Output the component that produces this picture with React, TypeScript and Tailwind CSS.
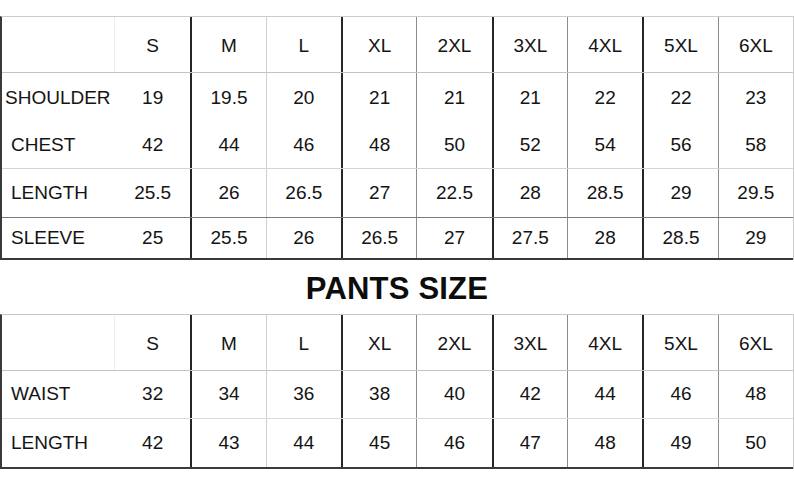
const sizes = ['S', 'M', 'L', 'XL', '2XL', '3XL', '4XL', '5XL', '6XL'];

// left divider of each size column (S has none)
const colLine = [
  '',
  'border-l-2 border-l-[#262626]',
  'border-l border-l-[#cfcfcf]',
  'border-l-2 border-l-[#262626]',
  'border-l border-l-[#8c8c8c]',
  'border-l-2 border-l-[#262626]',
  'border-l border-l-[#8c8c8c]',
  'border-l-2 border-l-[#262626]',
  'border-l border-l-[#8c8c8c]',
];

type Row = { label: string; values: string[]; h: string; line: string; pad?: string };

const shirt: Row[] = [
  { label: 'SHOULDER', values: ['19', '19.5', '20', '21', '21', '21', '22', '22', '23'], h: 'h-[50px]', line: '', pad: 'pl-[3px]' },
  { label: 'CHEST', values: ['42', '44', '46', '48', '50', '52', '54', '56', '58'], h: 'h-[46px]', line: 'border-b border-b-[#d4d4d4]' },
  { label: 'LENGTH', values: ['25.5', '26', '26.5', '27', '22.5', '28', '28.5', '29', '29.5'], h: 'h-[49px]', line: 'border-b border-b-[#7a7a7a]' },
  { label: 'SLEEVE', values: ['25', '25.5', '26', '26.5', '27', '27.5', '28', '28.5', '29'], h: 'h-[42px]', line: 'border-b-2 border-b-[#3a3a3a]' },
];

const pants: Row[] = [
  { label: 'WAIST', values: ['32', '34', '36', '38', '40', '42', '44', '46', '48'], h: 'h-[48px]', line: 'border-b border-b-[#dadada]' },
  { label: 'LENGTH', values: ['42', '43', '44', '45', '46', '47', '48', '49', '50'], h: 'h-[50px]', line: 'border-b-2 border-b-[#3a3a3a]' },
];

function SizeRow({ row }: { row: Row }) {
  return (
    <div className={`grid grid-cols-[113px_repeat(9,minmax(0,1fr))] ${row.h} ${row.line}`}>
      <div className={`flex items-center ${row.pad ?? 'pl-[9px]'}`}>{row.label}</div>
      {row.values.map((v, i) => (
        <div key={i} className={`flex items-center justify-center ${colLine[i]}`}>
          {v}
        </div>
      ))}
    </div>
  );
}

function Header() {
  return (
    <div className="grid grid-cols-[113px_repeat(9,minmax(0,1fr))] h-[56px] border-b border-b-[#c4c4c4]">
      <div className="border-r border-r-[#eeeeee]" />
      {sizes.map((s, i) => (
        <div key={s} className={`flex items-center justify-center pt-[4px] ${colLine[i]}`}>
          {s}
        </div>
      ))}
    </div>
  );
}

export default function App() {
  return (
    <div className="w-[794px] h-[501px] bg-white text-[#141414] text-[19px] font-['Liberation_Sans',Arial,sans-serif] overflow-hidden">
      <div className="pt-[16px]">
        <div className="border-t border-t-[#cccccc] border-l-2 border-l-[#3a3a3a] border-r border-r-[#cccccc]">
          <Header />
          {shirt.map(r => (
            <SizeRow key={r.label} row={r} />
          ))}
        </div>

        <div className="h-[54px] flex items-center justify-center pt-[4px]">
          <h2 className="text-[31px] font-bold tracking-[0.2px] text-[#0d0d0d]">PANTS SIZE</h2>
        </div>

        <div className="border-t border-t-[#c8c8c8] border-l-2 border-l-[#3a3a3a] border-r border-r-[#cccccc]">
          <Header />
          {pants.map(r => (
            <SizeRow key={r.label} row={r} />
          ))}
        </div>
      </div>
    </div>
  );
}
